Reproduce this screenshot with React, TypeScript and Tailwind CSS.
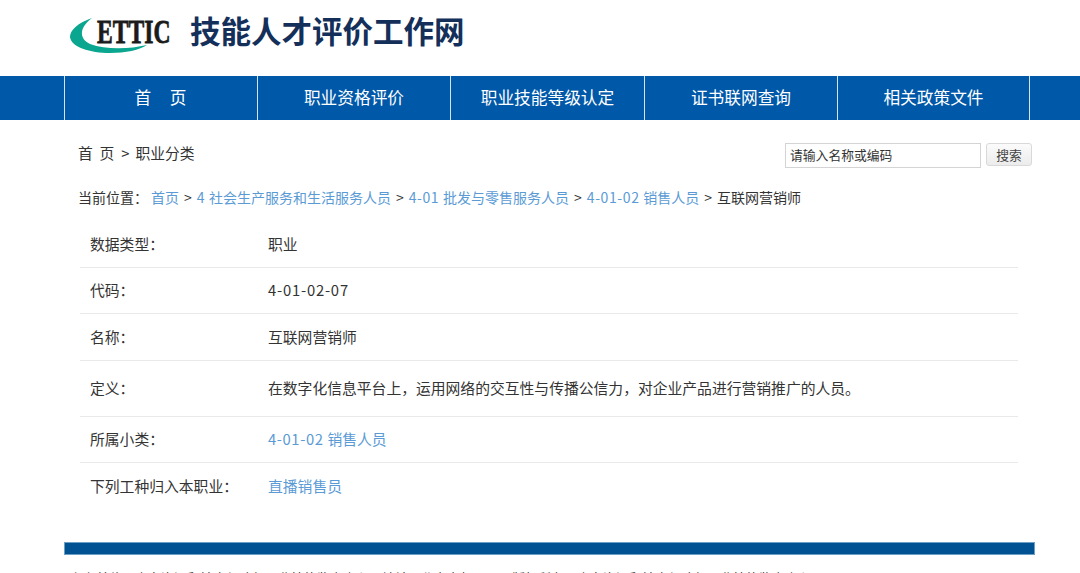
const FONT = "font-['Noto_Sans_CJK_SC','Noto_Sans',sans-serif]";

const navItems = ["首　页", "职业资格评价", "职业技能等级认定", "证书联网查询", "相关政策文件"];

const Logo = () => (
  <svg width="102" height="38" viewBox="0 0 102 38" className="shrink-0 overflow-visible">
    <path
      d="M22 1 C8 6 0 13 0 20 C1 30 20 36 40 36 C55 36 70 33 77 28 C60 32 36 33 20 27 C8 21 10 10 22 1 Z"
      fill="#0aa68f"
    />
    <text
      transform="translate(27 26) scale(0.695 1)"
      fontFamily="Liberation Serif"
      fontWeight="700"
      fontSize="34"
      fill="#1b1b1b"
      stroke="#1b1b1b"
      strokeWidth="0.8"
    >
      ETTIC
    </text>
  </svg>
);

const Row = ({ label, value, link, h, last }: { label: string; value: React.ReactNode; link?: boolean; h: string; last?: boolean }) => (
  <div className={`flex items-center pl-[10px] text-[14.8px] ${h} ${last ? "" : "border-b border-[#e9e9e9]"}`}>
    <div className="w-[178px] shrink-0 text-[#333]">{label}</div>
    <div className={link ? "text-[#5b9bd5]" : "text-[#333]"}>{value}</div>
  </div>
);

const Num = ({ children }: { children: React.ReactNode }) => <span className="tracking-[0.6px]">{children}</span>;

const Sep = () => <span className="mx-[5px] text-[#333]">&gt;</span>;

export default function App() {
  return (
    <div className={`h-[573px] w-[1080px] overflow-hidden bg-white text-[14px] ${FONT}`}>
      <header className="flex h-[76px] items-start pl-[70px]">
        <div className="mt-[17px]">
          <Logo />
        </div>
        <h1 className="ml-[18px] mt-[15px] text-[30.5px] font-bold leading-[30px] text-[#14305a]">技能人才评价工作网</h1>
      </header>

      <nav className="flex h-[44px] bg-[#0058a8] pl-[64px]">
        {navItems.map((item, i) => (
          <a
            key={item}
            className={`flex h-full items-center justify-center border-l border-[#d5e4f2] text-[16.7px] text-white ${i === 2 ? "w-[194px]" : "w-[193px]"} ${i === 0 ? "tracking-[1px]" : ""} ${i === 4 ? "border-r" : ""}`}
          >
            {item}
          </a>
        ))}
      </nav>

      <main className="pl-[78px] pr-[48px]">
        <div className="flex h-[48px] items-start justify-between pt-[23px]">
          <div className="text-[14.8px] leading-[20px] text-[#333]">
            首&nbsp;&nbsp;页<span className="ml-[7px] mr-[6px]">&gt;</span>职业分类
          </div>
          <div className="flex items-start">
            <div className="flex h-[25px] w-[196px] items-center border border-[#d4d4d4] pb-[1px] pl-[4px] text-[12.8px] text-[#333]">
              请输入名称或编码
            </div>
            <button className="ml-[5px] h-[23px] w-[46px] rounded-[3px] border border-[#d9d9d9] bg-linear-to-b from-[#fbfbfb] to-[#ececec] text-[12.8px] text-[#444]">
              搜索
            </button>
          </div>
        </div>

        <div className="mt-[19px] flex h-[20px] items-center text-[14px] text-[#333]">
          <span className="mr-[3px]">当前位置：</span>
          <span className="text-[#5b9bd5]">首页</span>
          <Sep />
          <span className="text-[#5b9bd5]">
            <Num>4 </Num>社会生产服务和生活服务人员
          </span>
          <Sep />
          <span className="text-[#5b9bd5]">
            <Num>4-01 </Num>批发与零售服务人员
          </span>
          <Sep />
          <span className="text-[#5b9bd5]">
            <Num>4-01-02 </Num>销售人员
          </span>
          <Sep />
          <span>互联网营销师</span>
        </div>

        <div className="ml-[2px] mr-[14px] mt-[10px]">
          <Row h="h-[51px] pt-[5px]" label="数据类型：" value="职业" />
          <Row h="h-[46px]" label="代码：" value={<span className="tracking-[0.8px]">4-01-02-07</span>} />
          <Row h="h-[47px]" label="名称：" value="互联网营销师" />
          <Row h="h-[56px]" label="定义：" value="在数字化信息平台上，运用网络的交互性与传播公信力，对企业产品进行营销推广的人员。" />
          <Row h="h-[46px]" label="所属小类：" value={<><Num>4-01-02 </Num>销售人员</>} link />
          <Row h="h-[47px]" label="下列工种归入本职业：" value="直播销售员" link last />
        </div>
      </main>

      <div className="ml-[64px] mt-[32px] h-[13px] w-[971px] border border-[#6d9fc4] bg-[#005293]" />

      <div className="ml-[70px] mt-[13px] whitespace-nowrap text-[13px] leading-[20px] text-[#333]">
        主办单位：人力资源和社会保障部职业技能鉴定中心　地址：北京市朝阳区　版权所有：人力资源和社会保障部职业技能鉴定中心
      </div>
    </div>
  );
}
